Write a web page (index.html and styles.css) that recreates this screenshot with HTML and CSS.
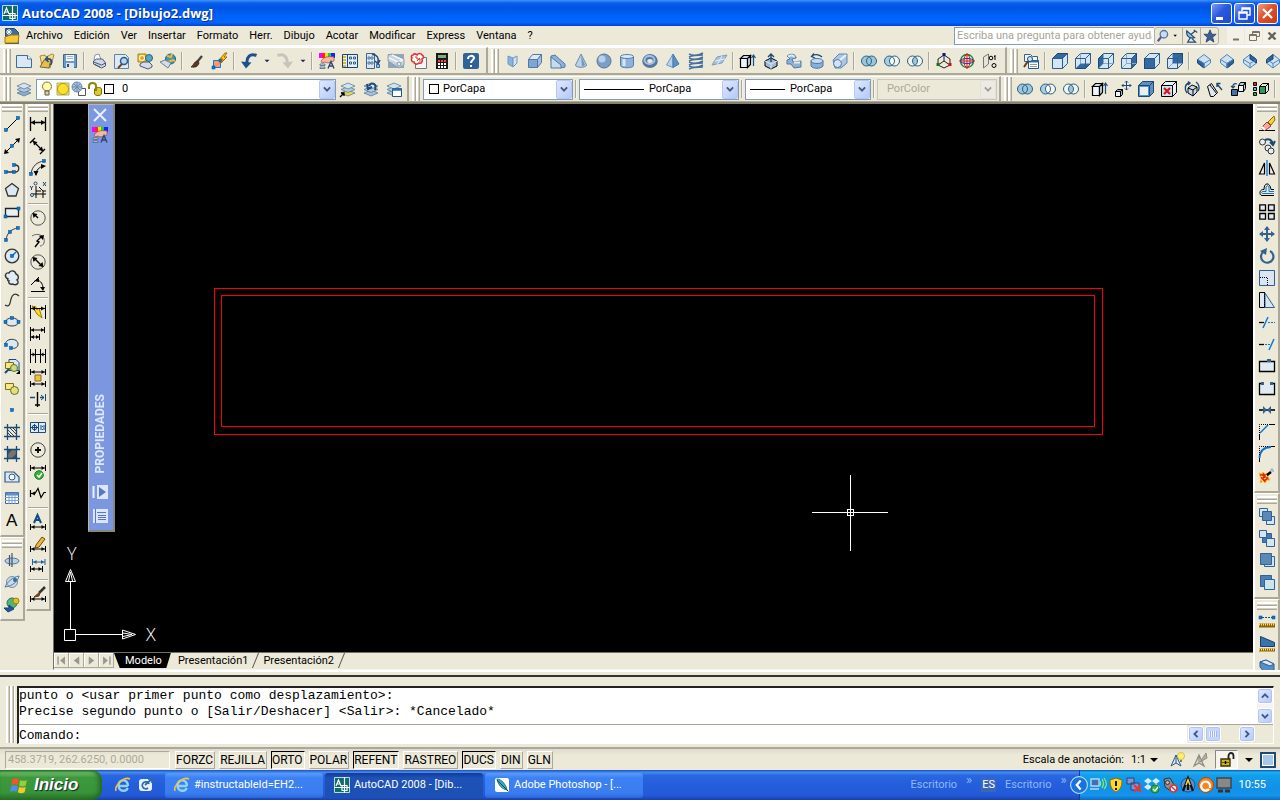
FILE: index.html
```html
<!DOCTYPE html>
<html lang="es">
<head>
<meta charset="utf-8">
<title>AutoCAD 2008 - [Dibujo2.dwg]</title>
<link rel="stylesheet" href="styles.css">
</head>
<body>
<header class="titlebar">
  <i data-icon="acad"></i>
  <h1>AutoCAD 2008 - [Dibujo2.dwg]</h1>
  <div class="winbtns">
    <button class="wb" aria-label="Minimizar"><svg viewBox="0 0 19 19"><path d="M4 13h7v3H4z" fill="#fff"/></svg></button>
    <button class="wb" aria-label="Restaurar"><svg viewBox="0 0 19 19"><path d="M7 7V4h8v7h-3M7 5h8M4 8h8v7H4zM4 9h8" fill="none" stroke="#fff" stroke-width="1.4"/></svg></button>
    <button class="wb close" aria-label="Cerrar"><svg viewBox="0 0 19 19"><path d="M5 5l9 9M14 5l-9 9" stroke="#fff" stroke-width="2.2"/></svg></button>
  </div>
</header>

<nav class="menubar">
  <i data-icon="doc"></i>
  <button>Archivo</button><button>Edición</button><button>Ver</button><button>Insertar</button><button>Formato</button><button>Herr.</button><button>Dibujo</button><button>Acotar</button><button>Modificar</button><button>Express</button><button>Ventana</button><button>?</button>
  <div class="help">
    <input type="text" aria-label="Pregunta" placeholder="Escriba una pregunta para obtener ayuda">
    <div class="helpbtns">
      <button aria-label="Buscar" class="wide"><i data-icon="lens"></i><i data-icon="caretsm"></i></button>
      <button aria-label="Comunicaciones"><i data-icon="dish"></i></button>
      <button aria-label="Favoritos"><i data-icon="star"></i></button>
    </div>
    <div class="mdibtns">
      <button aria-label="Minimizar dibujo"><i data-icon="mmin"></i></button>
      <button aria-label="Restaurar dibujo"><i data-icon="mres"></i></button>
      <button aria-label="Cerrar dibujo"><i data-icon="mclose"></i></button>
    </div>
  </div>
</nav>

<div class="row">
  <div class="toolbar" data-tools="new open save | plot preview publish dwf | brush match | undo v redo v | props dcenter palettes sheets markup calc | help"></div>
  <div class="toolbar" data-tools="polysolid box wedge cone sphere cylinder torus pyramid helix plane | extrude presspull sweep revolve loft | union subtract intersect | gizmo orbit align3d"></div>
  <div class="toolbar last" data-tools="views | vtop vbottom vleft vright vfront vback | isoSW isoSE isoNE isoNW"></div>
</div>

<div class="row">
  <div class="toolbar">
    <span class="grip"></span>
    <button class="tool" aria-label="Capas"><i data-icon="layers"></i></button>
    <div class="combo layer">
      <select aria-label="Capa"><option>0</option></select>
      <span class="pre"><i data-icon="bulb"></i><i data-icon="sun"></i><i data-icon="vpsun"></i><i data-icon="unlock"></i><b class="swatch"></b></span>
      <span class="arrow"><i data-icon="chev"></i></span>
    </div>
    <span class="tools" data-tools="laycur layprev laystate"></span>
  </div>
  <div class="toolbar">
    <span class="grip"></span>
    <div class="combo color">
      <select aria-label="Color"><option>PorCapa</option></select>
      <span class="pre"><b class="swatch"></b></span>
      <span class="arrow"><i data-icon="chev"></i></span>
    </div>
    <span class="sep"></span>
    <div class="combo ltype">
      <select aria-label="Tipo de línea"><option>PorCapa</option></select>
      <span class="pre"><b class="rule"></b></span>
      <span class="arrow"><i data-icon="chev"></i></span>
    </div>
    <span class="sep"></span>
    <div class="combo lweight">
      <select aria-label="Grosor de línea"><option>PorCapa</option></select>
      <span class="pre"><b class="rule"></b></span>
      <span class="arrow"><i data-icon="chev"></i></span>
    </div>
    <span class="sep"></span>
    <div class="combo plot off">
      <select aria-label="Estilo de trazado" disabled><option>PorColor</option></select>
      <span class="arrow"><i data-icon="chev"></i></span>
    </div>
  </div>
  <div class="toolbar last" data-tools="union subtract intersect | extrude fmove foffset fdelete frotate ftaper fcopy fcolor |"></div>
</div>

<main class="work">
  <div class="dock">
    <div class="toolbar" data-tools="line xline pline polygon rect arc circle cloud spline ellipse earc insblock mkblock point hatch gradient region table text"></div>
    <div class="toolbar" data-tools="orb1 orb2 orb3"></div>
  </div>
  <div class="dock">
    <div class="toolbar" data-tools="dlin dali darc dord | drad djog ddia dang | dquick dbase dcont dspace dbreak | dtol dcenterm dinsp djogl | dedit dtedit dupd | dstyle"></div>
  </div>

  <section class="drawing">
    <div class="canvas">
      <svg class="model" width="100%" height="100%">
        <g fill="none" stroke="#f00"><rect x="160.500" y="184.500" width="888" height="146"/><rect x="167.500" y="191.500" width="873" height="131"/></g>
        <g fill="none" stroke="#fff">
          <path d="M796.500 371v76M758 408.500h76"/><rect x="793.500" y="405.500" width="6" height="6"/>
          <path d="M10.500 525.500h11v11h-11zM16.500 525v-47M22 530.500h46M11.500 477.500l5-12 5 12zM14.500 477l2-9 2 9M68.500 526v9l13-4.500zM69 529l9 1.500-9 2"/>
        </g>
        <text x="13" y="456">Y</text><text x="92" y="537">X</text>
      </svg>
      <aside class="palette">
        <button aria-label="Cerrar paleta"><i data-icon="px"></i></button>
        <i data-icon="props"></i>
        <h2>PROPIEDADES</h2>
        <button aria-label="Ocultar automáticamente"><i data-icon="phide"></i></button>
        <button aria-label="Opciones de paleta"><i data-icon="pmenu"></i></button>
      </aside>
    </div>
    <div class="tabs">
      <button class="nav" aria-label="Primera"><i data-icon="first"></i></button><button class="nav" aria-label="Anterior"><i data-icon="prev"></i></button><button class="nav" aria-label="Siguiente"><i data-icon="next"></i></button><button class="nav" aria-label="Última"><i data-icon="lastt"></i></button>
      <button class="tab on">Modelo</button>
      <button class="tab">Presentación1</button>
      <button class="tab">Presentación2</button>
    </div>
  </section>

  <div class="dock right">
    <div class="toolbar" data-tools="erase copy mirror offset array move rotate scale stretch trim extend breakpt break join chamfer fillet explode"></div>
    <div class="toolbar" data-tools="front back above under"></div>
    <div class="toolbar" data-tools="dist area mass"></div>
  </div>
</main>

<section class="command">
  <span class="grip"></span>
  <div class="cmdbox">
    <div class="history">
      <div class="lines"><p>punto o &lt;usar primer punto como desplazamiento&gt;:</p><p>Precise segundo punto o [Salir/Deshacer] &lt;Salir&gt;: *Cancelado*</p></div>
      <div class="vscroll"><button class="sb" aria-label="Arriba"><i data-icon="sup"></i></button><button class="sb" aria-label="Abajo"><i data-icon="chev"></i></button></div>
    </div>
    <div class="prompt">
      <label for="cmd">Comando:</label><input id="cmd" type="text">
      <div class="hscroll"><button class="sb" aria-label="Izquierda"><i data-icon="sleft"></i></button><span class="sb thumb"></span><button class="sb end" aria-label="Derecha"><i data-icon="sright"></i></button></div>
    </div>
  </div>
</section>

<footer class="status">
  <output class="coords">458.3719, 262.6250, 0.0000</output>
  <div class="modes"><button>FORZC</button><button>REJILLA</button><button class="on">ORTO</button><button>POLAR</button><button class="on">REFENT</button><button>RASTREO</button><button class="on">DUCS</button><button>DIN</button><button>GLN</button></div>
  <div class="anno">
    <span>Escala de anotación:</span>
    <button class="flat">1:1 <i data-icon="caret"></i></button>
    <button class="flat" aria-label="Visibilidad"><i data-icon="annovis"></i></button>
    <button class="flat" aria-label="Escala automática"><i data-icon="annoauto"></i></button>
    <div class="tail">
      <button class="flat lock" aria-label="Bloqueo"><i data-icon="padlock"></i></button>
      <button class="flat" aria-label="Menú"><i data-icon="caret"></i></button>
      <button class="flat" aria-label="Limpiar pantalla"><i data-icon="clean"></i></button>
    </div>
  </div>
</footer>

<div class="taskbar">
  <button class="start"><i data-icon="winflag"></i>Inicio</button>
  <div class="quick"><button aria-label="Internet"><i data-icon="ie"></i></button><button aria-label="Correo"><i data-icon="mail"></i></button></div>
  <button class="task"><i data-icon="ie"></i><span>#instructableId=EH2...</span></button>
  <button class="task on"><i data-icon="acad"></i><span>AutoCAD 2008 - [Dib...</span></button>
  <button class="task"><i data-icon="ps"></i><span>Adobe Photoshop - [...</span></button>
  <div class="desk"><span>Escritorio</span><sup>»</sup><b>ES</b><span>Escritorio</span><sup>»</sup></div>
  <div class="tray">
    <button class="expand" aria-label="Mostrar iconos"><i data-icon="trayleft"></i></button>
    <i data-icon="wifi"></i><i data-icon="shield"></i><i data-icon="netx"></i><i data-icon="dropbox"></i><i data-icon="mute"></i><i data-icon="acomp"></i><i data-icon="avast"></i><i data-icon="monitor"></i>
    <time>10:55</time>
  </div>
</div>
<script src="icons.js"></script>
</body>
</html>
```

FILE: styles.css
```css
* { box-sizing: border-box; }
body { margin: 0; height: 100vh; display: flex; flex-direction: column; overflow: hidden; background: #ece9d8; color: #000; font: 11px/14px Roboto, "Liberation Sans", Arial, sans-serif; }
button, input, select { font: inherit; color: inherit; margin: 0; padding: 0; border: 0; background: none; border-radius: 0; }
button { display: flex; align-items: center; justify-content: center; white-space: nowrap; flex: none; }
i { display: block; width: 16px; height: 16px; flex: none; font-style: normal; }
i svg { display: block; width: 100%; height: 100%; overflow: visible; }
h1, h2, p { margin: 0; }

.titlebar { height: 26px; flex: none; display: flex; align-items: center; gap: 4px; padding: 0 2px; background: linear-gradient(#3a93ff, #0a5be8 12%, #0054e3 30%, #0062fb 65%, #0468ff 85%, #0043cf); }
.titlebar h1 { flex: 1; color: #fff; font: bold 13px/16px "Open Sans", "Noto Sans", sans-serif; text-shadow: 1px 1px #0a2c80; }
.winbtns { display: flex; gap: 2px; }
.wb { width: 21px; height: 21px; border: 1px solid #fff; border-radius: 3px; background: linear-gradient(135deg, #7d9cf0, #2a58e0 45%, #1c4bd0); }
.wb svg { width: 19px; height: 19px; }
.close { background: linear-gradient(135deg, #f0a080, #e0502c 45%, #c83a18); }

.menubar { height: 21px; flex: none; display: flex; align-items: center; padding-left: 4px; border-bottom: 2px solid #fff; }
.menubar > i { margin-right: 1px; }
.menubar > button { padding: 0 6px 0 5px; height: 18px; }
.help { margin-left: auto; display: flex; align-items: center; height: 18px; }
.help input { width: 200px; height: 18px; padding: 0 2px; border: 1px solid #7f9db9; border-right: 0; background: #fff; }
.help input::placeholder { color: #a7a596; opacity: 1; }
.helpbtns { display: flex; border: 1px solid #b4b0a0; border-radius: 3px; margin-right: 8px; }
.helpbtns button { width: 18px; height: 16px; border-left: 1px solid #b4b0a0; }
.helpbtns .wide { width: 27px; border-left: 0; }
.helpbtns i { width: 14px; height: 14px; }
.helpbtns .wide i + i { width: 11px; }
.mdibtns { display: flex; gap: 1px; }
.mdibtns button { width: 17px; height: 17px; background: #f4f2e8; }

.row { height: 28px; flex: none; display: flex; overflow: hidden; }
.row + .row { border-bottom: 2px solid #85826f; height: 29px; padding-top: 1px; }
.toolbar { flex: none; display: flex; align-items: center; padding: 0 4px 0 3px; border: 1px solid #fff; border-right: 2px solid #aca899; border-bottom: 2px solid #aca899; border-left-width: 0; }
.row + .row .toolbar { padding-right: 2px; border-bottom-width: 1px; }
.toolbar.last { flex: 1 0 auto; border-right: 0; }
.tools { display: flex; }
.grip { width: 8px; height: 24px; flex: none; margin: 0 1px 0 0; background: repeating-linear-gradient(to right, #fff 0 2px, #d4d0bf 2px 3px, #aca899 3px 4px); }
.tool { width: 23px; height: 22px; }
.tool.v { width: 13px; }
.tool.v i { width: 10px; }
.sep { width: 2px; height: 18px; flex: none; margin: 0 2px; border-left: 1px solid #aca899; border-right: 1px solid #f6f4ea; }

.combo { position: relative; height: 21px; }
.combo select { width: 100%; height: 21px; border: 1px solid #7f9db9; background: #fff; appearance: none; color: #000; opacity: 1; }
.combo .arrow { position: absolute; right: 1px; top: 1px; width: 16px; height: 19px; display: grid; place-items: center; border: 1px solid #b5c7f5; border-radius: 2px; background: linear-gradient(135deg, #dfe8ff, #b6c9f7); pointer-events: none; }
.combo .arrow i { width: 10px; height: 10px; }
.combo .pre { position: absolute; left: 3px; top: 0; height: 21px; display: flex; align-items: center; pointer-events: none; }
.swatch { width: 10px; height: 10px; border: 1px solid #000; background: #fff; margin-left: 3px; }
.rule { height: 1px; background: #000; margin-left: 2px; }
.layer { width: 300px; margin-left: 1px; } .layer select { padding-left: 85px; }
.layer .swatch { margin-left: 1px; }
.color { width: 150px; margin-left: 2px; } .color select { padding-left: 19px; }
.ltype { width: 160px; } .ltype select { padding-left: 69px; } .ltype .rule { width: 60px; }
.lweight { width: 126px; } .lweight select { padding-left: 44px; } .lweight .rule { width: 35px; }
.plot { width: 120px; } .plot select { padding-left: 9px; }
.combo.off select { border-color: #c9c7ba; background: #ece9d8; color: #aca899; }
.off .arrow { background: #eeece0; border-color: #dddacb; filter: grayscale(1); opacity: 0.5; }

.work { flex: 1; min-height: 0; display: flex; border-bottom: 2px solid #fff; }
.dock { width: 25px; margin-right: 1px; flex: none; overflow: hidden; display: flex; flex-direction: column; }
.dock .toolbar { flex-direction: column; padding: 0 0 4px; border-top: 0; border-left-width: 1px; }
.dock .toolbar + .toolbar { border-top: 1px solid #fff; padding-top: 2px; }
.dock .grip { width: 20px; height: 8px; margin: 0 0 1px; background: repeating-linear-gradient(#fff 0 2px, #d4d0bf 2px 3px, #aca899 3px 4px); }
.dock .tool { width: 22px; height: 22px; }
.dock .sep { width: 20px; height: 2px; margin: 2px 0; border: 0; border-top: 1px solid #aca899; border-bottom: 1px solid #fff; }
.dock.right { width: 27px; margin: 0; border-left: 1px solid #fff; }
.drawing { flex: 1; min-width: 0; margin-left: 1px; display: flex; flex-direction: column; border: 1px solid #716f64; border-width: 0 0 0 1px; border-bottom: 1px solid #f6f4ea; }
.canvas { flex: 1; min-height: 0; position: relative; background: #000; overflow: hidden; }
.model { display: block; position: absolute; inset: 0; }
.model text { fill: #fff; font: 300 18px "Open Sans", sans-serif; }
.palette { position: absolute; left: 34px; top: 0; width: 27px; height: 428px; display: flex; flex-direction: column; align-items: center; padding: 2px 3px 6px 0; background: #7b97e0; border: 1px solid #b9b7ac; border-right: 2px solid #8a887e; border-bottom: 2px solid #8a887e; }
.palette > i { margin-top: 4px; }
.palette h2 { margin-top: auto; margin-bottom: 11px; writing-mode: vertical-rl; transform: rotate(180deg); color: #dfe8fc; font: bold 12px/16px Roboto, sans-serif; }
.palette button + button { margin-top: 8px; }
.tabs { height: 17px; flex: none; display: flex; border-top: 1px solid #716f64; }
.nav { width: 15px; height: 15px; border: 1px solid #aca899; border-width: 0 1px 1px 0; box-shadow: inset 1px 1px #fff; }
.nav i { width: 11px; height: 11px; }
.tab { position: relative; height: 15px; padding: 0 8px 0 7px; }
.tab::after { content: ""; position: absolute; right: 0; top: 0; width: 1px; height: 15px; background: #55534a; transform: skewX(-22deg); }
.tab.on { color: #fff; background: #000; clip-path: polygon(0 0, 100% 0, 92% 100%, 10% 100%); padding: 0 9px 0 11px; }

.command { flex: none; height: 74px; display: flex; padding: 9px 6px 3px; margin-top: 3px; border-top: 2px solid #333; border-bottom: 2px solid #aca899; }
.command .grip { height: 57px; margin: 0 2px 0 0; width: 9px; }
.cmdbox { flex: 1; min-width: 0; background: #fff; border: 1px solid #fff; border-top: 2px solid #222; border-left: 2px solid #222; display: flex; flex-direction: column; font: 13px/16px "Liberation Mono", "Courier New", monospace; }
.history { display: flex; flex: 1; min-height: 0; border-bottom: 1px solid #aca899; }
.lines { flex: 1; }
.vscroll { display: flex; flex-direction: column; justify-content: space-between; background: #f4f3ec; }
.prompt { display: flex; align-items: center; height: 18px; }
.prompt label { padding-top: 4px; }
.prompt input { flex: 1; min-width: 0; outline: 0; }
.hscroll { width: 86px; height: 18px; display: flex; align-items: center; gap: 1px; background: #ece9d8; padding: 0 18px 0 1px; }
.sb { width: 16px; height: 16px; border: 1px solid #fff; border-radius: 3px; background: linear-gradient(135deg, #dfe8ff, #b6c9f7); box-shadow: inset 0 0 0 1px #b0c4f2; }
.sb i { width: 10px; height: 10px; }
.thumb { background: repeating-linear-gradient(to right, #eef3ff 0 1px, #9fb6ee 1px 2px) center / 8px 6px no-repeat, #c6d5fb; }
.end { margin-left: auto; }

.status { flex: none; height: 21px; display: flex; align-items: center; gap: 5px; padding: 0 4px 0 5px; background: linear-gradient(#dedbcb, #ece9d8 30%); }
.coords { width: 165px; height: 18px; padding: 1px 2px; color: #aca899; border: 1px solid #aca899; border-bottom-color: #fff; border-right-color: #fff; }
.modes { display: flex; gap: 4px; }
.modes button { height: 18px; padding: 0 1px 0 0; border: 1px solid #fff; border-right-color: #aca899; border-bottom-color: #aca899; font-size: 12px; }
.modes .on { border: 1px solid #000; border-right-color: #fff; border-bottom-color: #fff; }
.anno { margin-left: auto; display: flex; align-items: center; gap: 7px; }
.tail { display: flex; align-items: center; gap: 3px; }
.anno .lock { width: 23px; height: 19px; border: 1px solid #888; border-right-color: #fff; border-bottom-color: #fff; background: #f6f4ec; }

.taskbar { flex: none; height: 30px; display: flex; align-items: center; color: #fff; background: linear-gradient(#1f50c0, #3f8cf3 8%, #2b66e0 18%, #245edb 50%, #2359d6 85%, #1941a5); }
.start { width: 102px; height: 30px; justify-content: flex-start; gap: 6px; padding-left: 10px; border-radius: 0 10px 10px 0; background: linear-gradient(#2f7c2f, #6cbc6a 9%, #3d993c 25%, #389438 75%, #2a702a); font: italic bold 17px/20px "Liberation Sans", sans-serif; text-shadow: 1px 1px 1px #123; box-shadow: inset -3px 0 5px #236523; }
.start i { width: 18px; height: 18px; }
.quick { display: flex; gap: 7px; padding: 0 11px 0 13px; }
.task { width: 158px; height: 25px; margin-right: 2px; padding: 0 9px; gap: 4px; justify-content: flex-start; border-radius: 3px; background: linear-gradient(#5a9bfa, #3c81f3 20%, #3a7df0 80%, #2c66d8); }
.task.on { background: linear-gradient(#143a94, #1e52b7 20%, #1d50b5); }
.desk { margin-left: auto; display: flex; align-items: center; gap: 9px; padding-right: 12px; color: #8fb8fa; }
.desk sup { font-size: 13px; line-height: 8px; margin-top: -10px; }
.desk b { font-weight: normal; color: #fff; padding: 0 1px; background: #3a66b8; }
.tray { height: 30px; display: flex; align-items: center; gap: 2px; padding-right: 14px; background: linear-gradient(#0c59b9, #1ab0f5 8%, #139ee9 18%, #1290e8 60%, #1494ec 85%, #0d6abb); border-left: 1px solid #0a3f9a; }
.tray .expand { margin-left: -10px; }
.tray .expand i { width: 18px; height: 18px; }
.tray time { margin-left: 5px; }
```

FILE: icons.js
```js
const B = '#1c4a78', L = '#cfe0f2', M = '#4f86bd', K = '#000';
const p = (d, s = K, f = 'none', w = 1) => `<path d="${d}" stroke="${s}" fill="${f}" stroke-width="${w}"/>`;
const c = (x, y, r, s = K, f = 'none', w = 1) => `<circle cx="${x}" cy="${y}" r="${r}" stroke="${s}" fill="${f}" stroke-width="${w}"/>`;
const dot = (...pts) => pts.map(([x, y]) => `<rect x="${x - 1.5}" y="${y - 1.5}" width="3" height="3" fill="#0a78d0" stroke="#024a90" stroke-width=".5"/>`).join('');
const wire = (face, hidden = 'M5.500.500v10h10M5.500 10.500l-5 5') => p('M.5 5.500l5-5h10v10l-5 5H.5z', '#2a5c8c', '#d5e5f4') + p(face, '#1c4a78', '#3468a0') + p(hidden, '#86a9cc') + p('M.5 5.500h10v10M10.500 5.500l5-5', '#2a5c8c');
const iso = face => p('M8 1.500l6.500 5v3.500l-6.500 5-6.500-5v-3.500z', M, L) + p(face, B, '#2f6299') + p('M1.500 6.500l6.500 4 6.500-4M8 10.500v4.500', M);
const rings = (l, m, r) => `<ellipse cx="5.500" cy="8" rx="5" ry="5" fill="${l}"/><ellipse cx="10.500" cy="8" rx="5" ry="5" fill="${r}"/>` + p('M8 3.800a5 5 0 0 1 0 8.400a5 5 0 0 1 0-8.400', 'none', m) + c(5.5, 8, 5, '#285f88') + c(10.5, 8, 5, '#285f88');
const dimH = (y, x1 = .5, x2 = 15.5, s = K) => p(`M${x1} ${y - 3}v6M${x2} ${y - 3}v6M${x1} ${y}H${x2}`, s) + p(`M${x1 + 1} ${y}l3-2v4zM${x2 - 1} ${y}l-3-2v4z`, 'none', s);
const sheet = (x, y, f) => p(`M${x} ${y}l7-3 7 3-7 3z`, '#5d7f9e', f, .8);
const stack = f => sheet(1, 12, f) + sheet(1, 8.5, '#b6cbe0') + sheet(1, 5, '#d5e2ef');
const sq = (x, y, s, f) => p(`M${x} ${y}h${s}v${s}h-${s}z`, '#2f6299', f);
const frame = p('M3.500 0v16M12.500 0v16M0 3.500h16M0 12.500h16', '#1c4a78', 'none', 1.3);

const icons = {
  acad: '<rect width="16" height="16" fill="#0d6b6b"/>' + p('M.5.500h15v15H.5z', '#b9dada') + p('M2 9l2.500-6L7 9M3 7h3M0 10.500h16M10.500 0v16M8 8.500h5v5H8z', '#fff', 'none', 1.2),
  doc: p('M1.500.500h9l4 4v11h-13z', '#28506e', '#3b6d96') + p('M1 9l6-2 8 0-1 8H1z', '#a07a10', '#f5c93a') + p('M5 1v6M2 4h6M3 2l4 4M7 2l-4 4', '#fff'),
  lens: c(9, 6, 4.3, '#56749d', '#c8dcf4', 1.5) + p('M6 9l-4 5', '#4a5f85', 'none', 2.5),
  caretsm: p('M5 6h5l-2.500 3z', 'none', K), caret: p('M4 6h8l-4 4z', 'none', K),
  dish: p('M2 2c-1 5 3 10 9 8z', B, '#a9bfd8', 1.3) + p('M7 6l5-4M10 1l4 3M6 10l-3 5h9l-4-4', B, 'none', 1.3),
  star: p('M8 1l2 5h5l-4 3.500 1.500 5.500L8 12l-4.500 3L5 9.500 1 6h5z', '#2d4872', '#3e5c8c'),
  mmin: p('M5 11.500h6', '#777465', 'none', 2), mres: p('M6.500 6V3.500h7v5H11M6 4.500h8M3.500 6.500h7v6h-7zM3 7.500h8', '#777465'), mclose: p('M4.500 4.500l7 7M11.500 4.500l-7 7', '#66645a', 'none', 2.4),
  chev: p('M3 5.500l5 5 5-5', '#3d5a8c', 'none', 3), sup: p('M3 10.500l5-5 5 5', '#3d5a8c', 'none', 3), sleft: p('M10.500 3l-5 5 5 5', '#3d5a8c', 'none', 3), sright: p('M5.500 3l5 5-5 5', '#3d5a8c', 'none', 3),
  new: p('M.5 2.500h11l4 3.500v8.500H.5z', '#3c6c9c', '#d9e8f5') + p('M11.500 2.500v3.500h4', '#3c6c9c', '#fff'),
  open: p('M1 3l5-1 1 2 6-3 2 1-4 13-8-2z', '#a58a40', '#f5dd90') + p('M1 14l4-7 7-1-2 9z', '#7f6a24', '#e5bd53') + p('M11 12c3-2 2-7-3-6M9 3.500L6.500 6l3 3', '#214d7b', 'none', 1.5),
  save: p('M1.500 1.500h13v13h-13z', '#3f668f', '#6f9ac4') + '<path d="M4 2h8v6H4z" fill="#f4f8fc"/><path d="M4 10h8v5H4z" fill="#dfe7ee"/><path d="M5 11h2v3H5z" fill="#2d4f75"/>' + p('M5 3.500h6M5 5.500h6', '#9db4c8'),
  plot: p('M3 7l1-5 4-1 2 6', '#6a7fa0', '#fff', .8) + p('M2.500 8l3-2h6l3 4v3l-4 2-8-4z', '#4c5a78', '#cfd7e5') + p('M2.500 9l8 3 4-2M4 11.500l5 2.500', '#4c5a78'),
  preview: p('M.5 1.500h11l3 3v11H.5z', '#5f84a8', '#dceaf6') + c(10, 8, 3.500, '#2f5c88', '#b7d6f0', 1.5) + p('M8 11l-4 4', '#6d4428', 'none', 2),
  publish: p('M1 1h8v8H1z', '#a77e12', '#f3cb45') + c(5, 5, 2.500, '#fff', '#e2a419') + c(12, 5, 3.500, '#20658a', '#5ba7bd') + p('M3 11l3-2h6l3 3v2l-4 2-8-3z', '#4c5a78', '#d5dbe8'),
  dwf: c(10.500, 6, 5, '#1a5f80', '#3997bb') + p('M7 3l4 1 1-3M8 9l5-2 2 1', '#efb92e', 'none', 2) + p('M0 9l5-2 6 3-3 5-4-3z', '#6c8095', '#d2dce5'),
  brush: p('M13 3L8 9', '#444', 'none', 2.4) + p('M9 8c-4 0-4 4-7 6 4 .5 7 0 8-4z', '#3a2416', '#5b3720', .8),
  match: p('M1.500 7.500h7v7h-7z', '#1f75c4', '#f49a7a') + dot([1.5, 14.5], [8.5, 7.5]) + p('M13 0L8 6h3l-3 5 7-7h-3l3-4z', '#a46a00', '#ffd021'),
  undo: p('M15.500 2.500C9 0 5.500 4 6 10', '#1f4f8c', 'none', 3) + p('M0 8.500l10.500 1L5 15.500z', 'none', '#1f4f8c'),
  redo: p('M.5 2.500C7 0 10.500 4 10 10', '#c6c5bd', 'none', 3) + p('M16 8.500l-10.500 1L11 15.500z', 'none', '#c6c5bd'),
  props: '<path d="M0 0h3v5H0z" fill="#f0f"/><path d="M3 0h3v5H3z" fill="#f22"/><path d="M6 0h3v5H6z" fill="#fd0"/><path d="M9 0h3v5H9z" fill="#1c5"/><path d="M12 0h4v5h-4z" fill="#12f"/>' + p('M2 8c3-4 6-5 13-4v4c-4 1-6 3-9 1l-3 1z', '#a3504a', '#f2b8a4', .8) + p('M1 11h5v1.500H1zM1 14h5v1.500H1z', '#48688c', '#dde8f4', .8) + p('M9 15.500l3-7 3 7M10 13h4', '#28486f', 'none', 1.4),
  dcenter: p('M.5 1.500h15v13H.5z', '#1d466d', '#e6eff8') + p('M5.500 1v14', '#1d466d') + p('M1 4h3M1 7h3M1 10h3M1 13h3', '#e0b43a', 'none', 2) + p('M7.500 4h2v2h-2zM11.500 4h2v2h-2zM7.500 9h2v2h-2zM11.500 9h2v2h-2z', '#2d5c86', '#fff'),
  palettes: p('M1.500.500h8v15h-8z', '#3c668c', '#dbe8f4') + p('M3 4h2v2H3zM6 4h2v2H6zM3 9h2v2H3zM6 9h2v2H6z', '#2d5c86', '#fff', .8) + p('M7 1.500c5 0 7 3 6 8M10 8l3 3 2-4', '#224f7c', 'none', 1.5) + sq(11.5, 11.5, 3, '#9fc0df'),
  sheets: '<path d="M0 1h16v14H0z" fill="#8fa6b6"/>' + p('M0 2l4-1 12 5v6l-5 3L0 8z', '#7d94a5', '#c9d4dc', .8) + p('M1 5l9 4 5-2M4 2l11 5', '#f2f5f7', 'none', 1.6) + c(11, 11, 2, '#7d94a5', '#e7ecf0'),
  markup: p('M4.500 4.500h11v11h-11z', '#777', '#f5f5f5') + p('M2 2c1-2 3-1 4 0 1-2 4-2 5 0 2 1 2 3 0 4 1 3-1 5-3 4-2 2-5 1-5-1-3 0-3-3-2-4-1-1-1-3 1-3z', '#e03030', '#fff', 1.6) + p('M4 4h2v2h3v3M9 5l-3 3', '#e03030'),
  calc: '<path d="M2 0h12v16H2z" fill="#1b1b1b"/><path d="M4 2h8v3H4z" fill="#7fae7f"/>' + p('M4 8h2M7 8h2M10 8h2', '#f44', 'none', 2) + p('M4 11h2M7 11h2M10 11h2M4 14h2M7 14h2M10 14h2', '#fff', 'none', 2),
  help: '<rect width="16" height="16" rx="2" fill="#2f6298"/>' + p('M5 6c0-4 6-4 6-1 0 2-3 2-3 5M8 12v2', '#fff', 'none', 2),
  polysolid: p('M4 3l5 2v9l-5-3z', '#6f98c4', '#8bb2dc') + p('M9 5l4-2v7l-4 4z', '#6f98c4', '#cfe1f3'),
  box: p('M1.500 6.500h9v8h-9z', '#5478a2', '#7fa6d2') + p('M1.500 6.500l4-5h9l-4 5z', '#5478a2', '#dce9f6') + p('M10.500 6.500l4-5v8l-4 5z', '#5478a2', '#a2c0e0'),
  wedge: p('M1 3l4-1 10 9v3l-4 1L1 8z', '#5478a2', '#8fb2d8') + p('M1 4l10 8v3H1z', '#5478a2', '#c7daee'),
  cone: p('M8 1l5.500 11c0 3-11 3-11 0z', '#6a89ad', '#bcd2e9') + p('M8 2l4 10-3 1.500z', 'none', '#7896b8'),
  sphere: c(8, 8, 7, '#56749a', '#7d9ec6') + c(6, 6, 3.5, 'none', '#b9d0ea'),
  cylinder: p('M1.500 3.500v9c0 3 13 3 13 0v-9z', '#5a7eaa', '#8fb2da') + `<ellipse cx="8" cy="3.500" rx="6.500" ry="2" fill="#dbe8f5" stroke="#5a7eaa"/>` + p('M5 6v7', '#d6e4f3', 'none', 3),
  torus: `<ellipse cx="8" cy="8" rx="5.300" ry="4.500" fill="none" stroke="#55779f" stroke-width="5"/><ellipse cx="7.500" cy="7" rx="5" ry="4" fill="none" stroke="#a9c4e0" stroke-width="2"/>`,
  pyramid: p('M8 1L1.500 12 8 14.500z', '#6f98c4', '#b8d2ec') + p('M8 1l6 10-6 3.500z', '#4a78b0', '#5f8fc6'),
  helix: [2, 6, 10, 14].map(y => p(`M1 ${y - 1}c4 2 10 1 14-1M15 ${y}c-3 0-10 0-14 2`, '#45709f', 'none', 1.4)).join(''),
  plane: p('M1 12l5-8 10-2-5 8z', '#7f9dbd', '#aac3df') + p('M4 8l10-2M6 12l5-9', '#e5eef7'),
  extrude: p('M.5 5.500h7v9h-7z', K, '#eef4fa', 1.2) + p('M.5 5.500l3-3h7l-3 3zM7.500 5.500l3-3v9l-3 3z', K, '#c3d6ea', 1.2) + p('M13.500 13V3M11.500 5l2-3 2 3', '#1b4c80', 'none', 1.2),
  presspull: p('M8 5l6 3v5l-6 3-6-3V8z', K, '#9fb9d5') + p('M2 8l6 3 6-3M8 11v5', '#dfe9f3') + p('M8 9V1M5 4l3-3 3 3', B, 'none', 1.4),
  sweep: p('M1 3c4-3 9-2 9 2l-4 1 1 3 8-1v6l-7 1-3-4H1V7l3-1z', '#55789f', '#8fb1d8') + p('M2 3.500c4-2 6-1 6 1M8 9.500h6', '#e0ebf6', 'none', 2),
  revolve: p('M2 8v5c2 3 10 3 12 0V8z', '#4d77a6', '#8ab0d8') + `<ellipse cx="8" cy="8" rx="6" ry="2.500" fill="#c7dbef" stroke="#4d77a6"/>` + p('M13 4C10 1 5 1 3 3M5 .500L2.500 3.500 6 5', B, 'none', 1.3),
  loft: p('M1 7L7 1h8v9l-6 5H3z', '#5f86b2', '#a9c6e5') + c(5.500, 10.500, 4, '#4d77a6', '#d3e3f3') + p('M8 7l6-5', '#e9f1f9', 'none', 2),
  union: rings('#9fc6d8', '#9fc6d8', '#9fc6d8'), subtract: rings('#a9cede', '#fff', '#f4f4ee'), intersect: rings('#f4f4ee', '#9fc6d8', '#f4f4ee'),
  gizmo: p('M8 2l6 4v6l-6 3-6-3V6zM8 8v-6M8 8l6 4M8 8l-6 4', '#222') + '<path d="M6.500 0h3v3h-3z" fill="#118"/><path d="M12.500 10h3v3h-3z" fill="#c11"/><path d="M.5 10h3v3h-3z" fill="#171"/>',
  orbit: c(8, 8, 6.5, '#187c38', 'none', 1.3) + '<ellipse cx="8" cy="8" rx="3" ry="6.500" fill="none" stroke="#c22"/><ellipse cx="8" cy="8" rx="6.500" ry="2.500" fill="none" stroke="#22a"/>' + p('M8 0v16M0 8h16', '#c22'),
  align3d: p('M1.500 4l5-3v10l-5 4z', '#777', '#e7e5d9') + c(9, 5, 1.8, K) + c(12, 12.500, 2, K) + p('M13 2v5M12 3.500h1', K),
  views: p('M1.500 1.500h6l2 2h5v5h-13z', '#3a6288', '#f2f6fa') + p('M5.500 7.500h10v8h-10z', '#1f568c', '#fff') + p('M5.500 8.500h10', '#2f6fb0', 'none', 2) + p('M7 11.500h7M7 13.500h7', '#999') + c(7, 6, 2.5, B, '#cfe6fa') + p('M5 8l-4 6', '#5c3c22', 'none', 2),
  vtop: wire('M.5 5.500l5-5h10l-5 5z', 'M0 0'), vbottom: wire('M.5 15.500l5-5h10l-5 5z'), vleft: wire('M.5 5.500l5-5v10l-5 5z'), vright: wire('M10.500 5.500l5-5v10l-5 5z'), vfront: wire('M.5 5.500h10v10H.5z', 'M0 0'), vback: wire('M5.500.500h10v10h-10z'),
  isoSW: iso('M1.500 6.500l6.500 4v4.500L1.500 10z'), isoSE: iso('M14.500 6.500L8 10.500v4.500l6.500-5z'), isoNE: iso('M8 1.500l6.500 5v3.500L8 6z'), isoNW: iso('M8 1.500l-6.500 5v3.500L8 6z'),
  fmove: p('M.5 10.500h5v5h-5z', K, '#eef4fa') + p('M.5 10.500l2-2h5l-2 2zM5.500 10.500l2-2v5l-2 2z', K, '#8fb2d8') + p('M11.500 0v9M7 4.500h9M10 1.500l1.500-1.500 1.500 1.500M10 7.500l1.500 1.500 1.500-1.500M8.500 3L7 4.500 8.500 6M14.500 3L16 4.500 14.500 6', B),
  foffset: p('M.5 4.500l4-4h11v11l-4 4H.5z', B, '#5f8fc0') + p('M11.500 4.500l4-4M11.500 15V4.500H.5', B) + '<path d="M2 6h8v8H2z" fill="#e6f0f9"/>', fdelete: p('M.5 4.500h11v11H.5z', K, L) + p('M.5 4.500l4-4h11l-4 4zM11.500 4.500l4-4v11l-4 4z', K, '#e6f0f9') + p('M3 7l6 6M9 7l-6 6', '#d01818', 'none', 2.2),
  frotate: p('M4 7l4-3 5 2v5l-4 4-5-3z', K, '#c5d9ed') + p('M4 7l5 2 4-3M9 9v6', K) + p('M3 12C0 8 1 3 5 2M12 1c3 2 4 6 2 9M4 .500l2 1.500-2 2', B, 'none', 1.4),
  ftaper: p('M.5 5.500l4-3 6 9-4 4h-3z', K, '#dfe9f4') + p('M3 4l7 9', K) + p('M10 3l5 6M10 6V2.500h3.500', B, 'none', 1.4),
  fcopy: p('M1.500 8.500h6v6h-6z', K, '#3d74ad') + p('M8.500 4.500h5v6h-5z', K, '#eef4fa') + p('M8.500 4.500l2-3h5l-2 3zM13.500 4.500l2-3v6l-2 3z', K, '#b7cfe7') + p('M7 3C4 2 2 4 3 7M1 5l2 2 2-2', B, 'none', 1.2),
  fcolor: p('M.5 1.500h3v3h-3z', K, '#e22') + p('M.5 6.500h3v3h-3z', K, '#3cf') + p('M.5 11.500h3v3h-3z', K, '#2b2') + p('M6.500 5.500h6v7h-6z', K, '#2f9a58') + p('M6.500 5.500l3-3h6l-3 3zM12.500 5.500l3-3v7l-3 3z', K, '#dceee2'),
  layers: stack('#8facc9'), bulb: c(8, 5.500, 4.500, '#8a7a10', '#fffbb0') + p('M6 10h4v4H6z', '#555', '#e3d98a'),
  sun: p('M2 2h12v12H2z', '#b9b02a', '#c9dff0') + c(8, 8, 5.500, '#b59a00', '#ffe02a'),
  vpsun: p('M7.500 7.500h7v7h-7z', '#555', '#fff') + c(6, 6, 5, '#6a8bac', '#a9c3dc') + p('M6 1v10M1 6h10M2.500 2.500l7 7M9.500 2.500l-7 7', '#6a8bac'),
  unlock: p('M7.500 8c1-2 7-2 7 0v5c-1 2-6 2-7 0z', '#7c7200', '#d8cb33') + p('M9 10V5C9 1 2 1 2 5v3', '#8e8410', 'none', 2),
  laycur: stack('#f1d33d') + p('M0 16l4-4M1 12h3v3', K, 'none', 1.3), layprev: stack('#a9c0d8') + p('M12 9C14 3 9 0 6 5M4 3l1 5 4-2', B, 'none', 2),
  laystate: stack('#a9c0d8') + p('M6.500 7.500h9v8h-9z', '#1f568c', '#fff') + p('M6.500 8.500h9', '#2f6fb0', 'none', 2.500),
  line: p('M2 14L14 2') + dot([2, 14], [14, 2]), xline: p('M1 15L15 1') + p('M0 16l1-5 4 4zM16 0l-1 5-4-4z', 'none', K) + dot([8, 8]),
  pline: p('M2 12h9c5 0 5-7 0-7', '#333', 'none', 1.3) + dot([2, 12], [10, 12], [10, 5]), polygon: p('M8 1.500l6.500 5-2.500 7.500H4L1.500 6.500z', '#333', '#dce9f4', 1.3),
  rect: p('M1.500 4.500h13v8h-13z', '#222', '#e8f0f7', 1.3) + dot([1.5, 12.5], [14.5, 4.5]), arc: p('M2 14C3 7 7 3 14 2', '#333') + dot([2, 14], [6, 6], [14, 2]),
  circle: c(8, 8, 6.8, '#333', '#dce9f4', 1.3) + p('M8 8l4-4', '#07c', 'none', 1.4) + dot([8, 8]), cloud: p('M4 9C0 7 1 2 5 3c1-3 6-3 7 1 3 1 3 5 1 6 3 3-1 6-4 4-3 1-5-1-4-3-1 0-2-1-1-2z', '#333', '#e2ecf5', 1.4),
  spline: p('M1 13c5 3 5-2 6-6s4-7 8-3', '#333', 'none', 1.2), ellipse: '<ellipse cx="8" cy="8" rx="6.500" ry="4" fill="#dce9f4" stroke="#333"/>' + dot([1.5, 8], [14.5, 8], [8, 4]),
  earc: p('M2 10C-1 2 14 1 14 8c0 4-4 5-7 4', '#333', '#dce9f4') + dot([2, 9], [7, 12]), insblock: p('M5 1.500h7l3 3v8H5z', B, '#dbe8f4') + p('M1.500 4.500h8v6h-8z', '#806e14', '#f7e886') + c(10, 10, 3.500, '#5d6f2b', '#cfdc7d') + p('M16 16v-4l-4 4z', 'none', K) + p('M1 15l4-4', B, 'none', 2),
  mkblock: p('M1.500 3.500h8v6h-8z', '#806e14', '#f7e886') + c(10.500, 10.500, 4, '#5d6f2b', '#e5de79'), point: dot([8, 8]),
  hatch: frame + p('M4 6l6 6M4 9l3 3M6 4l6 6M9 4l3 3', '#345'), gradient: '<path d="M3 3h10v10H3z" fill="#334c78"/><path d="M3 9l6-6h4v4l-6 6H3z" fill="#77756b"/>' + frame,
  region: p('M1 4h9l5 5v5H1z', '#2e5a86', '#dce9f4', 1.2) + c(8, 9, 3, '#2e5a86', '#f6fafd'), table: p('M1.500 2.500h13v11h-13z', '#3a66a0', '#fff') + p('M1.500 4h13', '#5b88c0', 'none', 3) + p('M1 7.500h14M1 10.500h14M5 3v11M8 3v11M11 3v11', '#7ba0cf'),
  text: '<text x="2" y="14" font-size="17" font-family="Liberation Sans">A</text>',
  orb1: '<ellipse cx="8" cy="9" rx="7" ry="3" fill="#bcd0e6" stroke="#4d77a6"/>' + p('M8 1v14M5.500 3v11', '#456', 'none', 1.2), orb2: c(8, 8, 5.500, '#7890a8', '#ccd9e6') + p('M1 13C3 8 9 3 15 2c-1 5-6 10-14 11z', '#4d77a6') + c(11, 6, 2, 'none', '#2f6cb0'), orb3: c(8, 7, 5, '#2a7b4c', '#4fb57a') + c(12, 5, 3, '#a08010', '#e2bf28') + p('M0 12h5v-3l5 4-6 3z', '#173f78', '#205a9a'),
  dlin: p('M.5 1v14M15.500 1v14M1 6.500h14', K, 'none', 1.3) + p('M1 6.500l4-2.500v5zM15 6.500l-4-2.500v5z', 'none', K), dali: p('M0 5l5-5M10 16l5-5M3 3l10 10', K, 'none', 1.4) + p('M3 3l4.500 1L4 7.500zM13 13l-4.500-1L12 8.500z', 'none', K),
  darc: p('M1 14C2 6 7 2 14 1', '#333') + p('M6 15c0-5 3-8 8-9', K) + p('M16 6l-5-2v5zM6 16l-2.500-5h5z', 'none', K) + dot([1, 14], [14, 1]), dord: p('M6 4v12M3 12h13M9 5l4 4h3M6 9h5M13 9v7') + c(5.500, 1.500, 1.5, B) + c(2, 13, 1.5, B) + p('M0 4l1.500 2L3 4M1.500 6v2M13 0l3 4M16 0l-3 4', B),
  drad: c(8, 8, 7.2, '#555') + p('M8 8L4 4', K, 'none', 1.4) + p('M2.500 3l5 1-4 4z', 'none', K), djog: p('M2 4c6-4 14 0 12 7-1 2-2 3-4 3', '#666') + p('M5 15l4-5-2-1 5-5', K, 'none', 1.4) + p('M14 3l-5 1 4 4z', 'none', K),
  ddia: c(8, 8, 7.2, '#555') + p('M4 4l8 8', K, 'none', 1.4) + p('M2.500 3l5 1-4 4zM13.500 13l-5-1 4-4z', 'none', K), dang: p('M1 9l8-8M1 15.500h14M7 4c4 1 6 4 6 9') + p('M4 5l5-3v4zM13 15l-3-4h5z', 'none', K),
  dquick: p('M2 2l4 1 1 3 2-2 3 10-5-4z', '#947b00', '#ffdc1e') + p('M.5 1v14M15.500 1v14M1 4.500h14') + p('M1 4.500l4-2v4zM15 4.500l-4-2v4z', 'none', K), dbase: p('M.5 1v14M14.500 1v6M9.500 8v6M1 4h13M1 11h8') + p('M1 4l3-2v4zM14 4l-3-2v4zM1 11l3-2v4zM9 11l-3-2v4z', 'none', K), dcont: p('M.5 1v14M5.500 1v14M10.500 1v14M15.500 1v14M1 6.500h14') + p('M5.500 6.500l-3-2v4zM10.500 6.500l3-2v4z', 'none', K),
  dspace: dimH(2) + dimH(14) + p('M5 5h6v6H5z', '#8d6a18', '#f3bf4b'), dbreak: p('M0 5.500h5M10 5.500h4', B, 'none', 1.6) + p('M11 3l3 2.500L11 8M15.500 2v7', B) + p('M7.500 0v15M5 13h5', K, 'none', 1.4), dtol: p('M.5 2.500h15v10H.5zM8.500 2.500v10', B, '#dcecf8') + c(4.500, 7.500, 2.3, B) + p('M4.500 4v7M1 7.500h7M11 5v5M14 5v5M12.500 6v1M12.500 9v1', B),
  dcenterm: c(8, 8, 7.2, '#444') + p('M8 5v6M5 8h6', K, 'none', 1.8), dinsp: dimH(4) + c(9, 11, 4.3, '#1a7a2a', '#34b233') + p('M7 11l2 2 3-4', '#fff', 'none', 1.5), djogl: p('M.5 4v7M0 7.500h5l3-5 3 9 3-5h2', K, 'none', 1.2) + p('M1 7.500l4-2v4z', 'none', K),
  dedit: dimH(13) + p('M4 9l3.500-8L11 9M5.500 6h4', '#0f4a86', 'none', 2), dtedit: dimH(13) + p('M6 9l6-8 3 2-6 8-4 1z', '#6a4a10', '#f0b83a'), dupd: dimH(4, 2.5, 15, '#1e62a0') + dimH(11, .5, 12.5), dstyle: dimH(13) + p('M15 1L9 7', '#333', 'none', 2.500) + p('M10 6L4 11l5-1z', '#60391c', '#7c4b28'),
  erase: p('M0 14.500h16') + p('M15 0L9 6l3 3 4-5z', '#8a6d00', '#f8d040') + p('M8 6l4 4-5 4-4-1 1-3z', '#a33', '#f3a8a0') + p('M3 11l3 3', '#fff', 'none', 2), copy: c(3.500, 4, 3, '#333', '#e6edf4') + c(9, 10, 3, '#333', '#e6edf4') + c(12, 13, 3, '#333', '#e6edf4') + p('M6 2c4-2 7 0 8 4M11 4l3 3 2-4', B, 'none', 2),
  mirror: p('M5.500 3v11H.5zM10.500 3v11h5z', K, '#eef2f6', 1.2) + p('M8 0v16', '#0b74d0', 'none', 1.3), offset: p('M15 7.500h-3C11 0 5 0 5 7.500 0 7 0 13.500 3 13.500h12', K) + p('M15 9.500H10V6c0-3-3-3-3 0v3.500H4c-2 0-2 2 0 2h11', '#0b74d0'), array: [[.8, .8], [9.5, .8], [.8, 9.5], [9.5, 9.5]].map(([x, y]) => p(`M${x} ${y}h5.700v5.700h-5.700z`, K, '#dfeaf4', 1.3)).join(''),
  move: p('M8 1v14M1 8h14', '#34618e', 'none', 2) + p('M8 0l3 4H5zM8 16l3-4H5zM0 8l4-3v6zM16 8l-4-3v6z', 'none', '#34618e'), rotate: p('M4 4a6.200 6.200 0 1 0 7-1', '#34618e', 'none', 2.200) + p('M1 3l7-3-1 7z', 'none', '#34618e'),
  scale: p('M.5.500h15v15H.5z', '#2e5f8f', '#d9e6f2') + '<path d="M1 7.500h7.500V15" fill="none" stroke="#000" stroke-dasharray="1"/>', stretch: p('M.5.500h5v15h-5z', K, '#dfe9f2') + p('M6 1l9.500 14.500H6z', '#2e5f8f', '#d9e6f2') + '<path d="M5.500 0v15" stroke="#000" stroke-dasharray="1"/>',
  trim: p('M0 8.500h5', K, 'none', 1.3) + p('M4 14L9 3', '#0b74d0', 'none', 1.4) + '<path d="M9 8.500h7" stroke="#0b74d0" stroke-dasharray="2 1"/>', extend: p('M0 8.500h5', K, 'none', 1.3) + p('M10 14l5-11', '#0b74d0', 'none', 1.4) + '<path d="M6 8.500h6" stroke="#0b74d0" stroke-dasharray="2 1"/>',
  breakpt: p('M.5 3.500h15v10H.5z', K, '#e2ebf4', 1.3) + p('M8 2.500h4', '#34618e', 'none', 3), break: p('M3 3.500H.5v11h15v-11H13', K, '#e2ebf4', 1.3) + p('M2 3.500h3M11 3.500h3', '#34618e', 'none', 3), join: p('M0 8h16', K, 'none', 1.6) + p('M4 4l4 4-4 4zM12 4L8 8l4 4z', 'none', '#34618e'),
  chamfer: p('M.5 10v6M10 .500h6') + p('M1 9l8-8', '#0b74d0', 'none', 1.4) + '<path d="M.5 9V.5h9" fill="none" stroke="#000" stroke-dasharray="1"/>', fillet: p('M.5 10v6M10 .500h6') + p('M.5 12C1 5 5 1 12 1', '#0b74d0', 'none', 1.8) + '<path d="M.5 9V.5h9" fill="none" stroke="#000" stroke-dasharray="1"/>',
  explode: p('M0 5l3 1 1-2 2 2 4-1-1 4 2 3-3 0-2 3-2-2-3 2 1-4z', '#f8c41c', '#e02818') + p('M2 8l2 1M5 11l2-1M1 11l3 2M7 7l1 2', '#ffe26a', 'none', 1.3) + p('M8 7l4-3', K, 'none', 2.400) + p('M11 2h4M13 0v4M12 1l3 3', '#8cb5d8'),
  front: sq(.5, .5, 8, '#d5e6ee') + sq(7.5, 8.5, 8, '#d5e6ee') + sq(3.5, 3.5, 9, '#5c88b5'), back: sq(3.5, 3.5, 9, '#4a78a9') + sq(.5, .5, 7, '#d5e6ee') + sq(7.5, 8.5, 8, '#d5e6ee'), above: sq(5.500, 4.500, 10, '#cfe3ea') + sq(1.500, 1.500, 11, '#5c88b5'), under: sq(1.500, 1.500, 11, '#4f7fb2') + sq(5.500, 5.500, 10, '#cfe3ea'),
  dist: '<path d="M0 3.500h16" stroke="#1c4a78" stroke-dasharray="2 1"/>' + dot([1.5, 3.5], [14.5, 3.5]) + p('M0 11.500h16', '#8a6500', '#000', 4) + '<path d="M0 10.500h16" stroke="#ffe07a" stroke-width="2" stroke-dasharray="1"/>', area: p('M1.500.500l14 6v4h-14z', '#173f6b', '#3c72a8') + p('M0 14h16', '#8a6500', '#000', 3) + '<path d="M0 13.500h16" stroke="#ffe07a" stroke-width="2" stroke-dasharray="1"/>',
  mass: p('M1 4l6-2 8 4v9H6L1 9z', '#2c5f92', '#5a8dc0') + p('M1 4l6-2 8 4-4 2z', '#2c5f92', '#dbe8f4'),
  px: p('M2 2l12 12M14 2L2 14', '#eaf0ff', 'none', 2), phide: p('M1.500 2v12', '#eaf0ff', 'none', 2) + '<path d="M5 1h11v14H5z" fill="#dce6fb"/><path d="M7 3l7 5-7 5z" fill="#5877c9"/>', pmenu: '<path d="M1 1h15v14H1z" fill="#dce6fb"/>' + p('M3.500 1v14M5 4.500h9M6 7.500h8M6 9.500h8M6 11.500h8', '#5877c9'),
  first: p('M3 2v12', '#99968a', 'none', 2) + p('M13 2v12L6 8z', 'none', '#99968a'), prev: p('M12 2v12L4 8z', 'none', '#99968a'), next: p('M4 2v12l8-6z', 'none', '#99968a'), lastt: p('M13 2v12', '#99968a', 'none', 2) + p('M3 2v12l7-6z', 'none', '#99968a'),
  annovis: p('M2 14L7 3l5 11-5-3zM7 3v8', '#2d5d8a', '#d6e5f2') + c(12, 4, 3.500, '#c8b430', '#ffee70', .8) + p('M11 9h2', '#777', 'none', 2), annoauto: p('M2 14L7 3l5 11-5-3zM7 3v8', '#8f8d82', '#dddacc', 1.2) + p('M8 10l6-9 1 5z', '#8f8d82', '#b3b1a5'),
  padlock: p('M2 7h9v7H2z', '#3b3500', '#c9b72a', 1.4) + p('M2 10.500h9', '#6a6000') + p('M9.500 7V4c0-4 5-4 5 0v3', '#222', 'none', 1.8) + p('M6.500 9v3', K, 'none', 1.5), clean: p('M1 1h14v14H1z', B, '#fff', 2) + '<path d="M3 3h10v10H3z" fill="#a8c8ea"/>',
  winflag: '<path d="M2 3c2-1.500 4-1 6 0L7 8C5 7 3 7 1 8z" fill="#f0552b"/><path d="M9 3.500c2 1 4 1 6 0L14 8.500c-2 1-4 1-6 0z" fill="#8fd03c"/><path d="M1 9c2-1 4-1 6 0l-1 5c-2-1-4-1-6 0z" fill="#4d8ff0"/><path d="M8 9.500c2 1 4 1 6 0l-1 5c-2 1-4 1-6 0z" fill="#fbc62c"/>',
  ie: p('M13 9H4.500M13 9C13 1 3 2 3.500 9c.5 6 8 6 9 2', '#8fd4ff', 'none', 2.4) + p('M1 14C-1 9 9-1 15 2', '#f6c43a', 'none', 1.6), mail: '<rect x="1" y="2" width="13" height="12" rx="3" fill="#eaf3fb"/>' + p('M11 7a3.500 3.500 0 1 0-1 4M7 8l7-6M10 2h4v4', '#2769b8', 'none', 1.7),
  ps: '<rect x="1" y="1" width="14" height="14" rx="2" fill="#fff"/>' + p('M3 2c4 0 9 5 10 11C8 12 4 8 3 2z', '#1f7894', '#3fa7c0') + p('M3 3l11 11', '#1d4f28'),
  trayleft: c(8, 8, 7.500, '#b9dcff', '#1a72dc') + p('M9.500 4L6 8l3.500 4', '#fff', 'none', 2), wifi: p('M1 2h8v7H1zM0 12h9', '#b7d5f0', '#3d70b5', 1.4) + p('M10 4c1 2 1 3 0 5M12 2c2 3 2 6 0 9M14 1c3 4 3 8 0 11', '#7ff06a', 'none', 1.2),
  shield: p('M8 1l6 2c0 7-2 10-6 12C4 13 2 10 2 3z', '#8b6b00', '#ffd629') + p('M8 4v5M8 11v2', K, 'none', 1.8), netx: p('M1 1h7v6H1zM5 6h8v7H5z', '#29427d', '#8094c8') + p('M8 8l7 7M15 8l-7 7', '#e33', 'none', 2.2), dropbox: p('M4 1l4 3-4 3-4-3zM12 1l4 3-4 3-4-3zM4 7l4 3-4 3-4-3zM12 7l4 3-4 3-4-3z', 'none', '#d8ecff') + c(11, 12, 4, '#167a28', '#2fb53c') + p('M9 12l2 2 3-4', '#fff', 'none', 1.3),
  mute: p('M2 2l6-1 4 7-3 6-6-4z', '#333', '#8a8f95') + c(5.500, 5.500, 2, '#333', '#bbb') + c(11.500, 11.500, 3.500, '#d33', '#fff', 1.7) + p('M9 9l5 5', '#d33', 'none', 1.500), acomp: c(8, 8, 7, '#264a88', '#5d8fc8') + p('M3 14L8 1l5 13M8 3v10', '#111', 'none', 2.200) + p('M6 8l2-5 2 5', '#f3dc42', 'none', 1.5), avast: c(8, 8, 7.500, '#b84600', '#f68420') + p('M11 12a4.500 4.500 0 1 1 1-4v3', '#fff', 'none', 2.200), monitor: p('M1 1h14v10H1z', '#444', '#888', 1.500) + p('M2 14h5M9 14h5', '#333', 'none', 3),
  v: p('M4 6h8l-4 4z', 'none', '#1d2b5a')
};

const svg = name => `<svg viewBox="0 0 16 16" aria-hidden="true">${icons[name]}</svg>`;
document.querySelectorAll('[data-tools]').forEach(bar => {
  const grip = bar.classList.contains('toolbar') ? '<span class="grip"></span>' : '';
  bar.innerHTML = grip + bar.dataset.tools.split(' ').map(n =>
    n === '|' ? '<span class="sep"></span>' : `<button class="tool ${n === 'v' ? 'v' : ''}" aria-label="${n}"><i>${svg(n)}</i></button>`).join('');
});
document.querySelectorAll('[data-icon]').forEach(el => { el.innerHTML = svg(el.dataset.icon); });
```
